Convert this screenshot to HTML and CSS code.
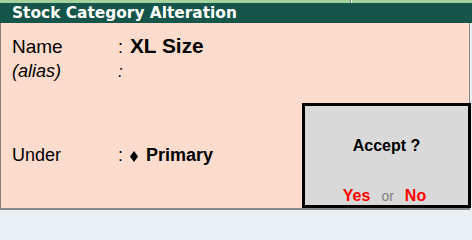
FILE: index.html
```html
<!DOCTYPE html>
<html>
<head>
<meta charset="utf-8">
<link rel="stylesheet" href="styles.css">
</head>
<body>
<div class="screen">
  <div class="menu-strip">
    <div class="menu-left"></div>
    <div class="menu-right"></div>
  </div>
  <div class="title-bar">Stock Category Alteration</div>
  <div class="form">
    <div class="fields">
      <div class="row row-name">
        <span class="label">Name</span>
        <span class="colon">:</span>
        <span class="value value-name">XL Size</span>
      </div>
      <div class="row row-alias">
        <span class="label label-alias">(alias)</span>
        <span class="colon">:</span>
        <span class="value"></span>
      </div>
      <div class="row row-under">
        <span class="label">Under</span>
        <span class="colon">:</span>
        <span class="value value-under"><svg class="diamond" width="8" height="11" viewBox="0 0 8 11"><polygon points="4,0 8,5.5 4,11 0,5.5" fill="#000"/></svg>Primary</span>
      </div>
    </div>
    <div class="accept-box">
      <div class="accept-title">Accept ?</div>
      <div class="accept-choices"><span class="choice">Yes</span><span class="or">or</span><span class="choice">No</span></div>
    </div>
  </div>
</div>
</body>
</html>
```
FILE: styles.css
```css
html, body {
  margin: 0;
  padding: 0;
}
body {
  width: 472px;
  height: 211px;
  background: #eaeff3;
  font-family: "Liberation Sans", Arial, sans-serif;
  color: #000;
  overflow: hidden;
}
.screen {
  position: relative;
  width: 472px;
  height: 211px;
}
.menu-strip {
  display: flex;
  height: 3px;
  background: #a3d29c;
}
.menu-left {
  width: 350px;
}
.menu-right {
  flex: 1;
  border-left: 1px solid #7d8f7a;
  box-shadow: inset 1px 0 0 #e8f4e6;
}
.title-bar {
  height: 20px;
  background: #16554a;
  color: #fff;
  font-family: "DejaVu Sans", Verdana, sans-serif;
  font-weight: bold;
  font-size: 15.4px;
  line-height: 20px;
  padding-left: 12px;
}
.form {
  width: 468px;
  height: 185px;
  background: #fedccd;
  border-left: 1px solid #808080;
  border-right: 1px solid #8a8a8a;
  border-bottom: 2px solid #8a8a8a;
}
.fields {
  padding: 12px 0 0 11px;
}
.row {
  display: grid;
  grid-template-columns: 106px 12px auto;
  align-items: baseline;
}
.label {
  font-size: 18px;
}
.row-name {
  line-height: 22px;
}
.row-name .label {
  font-size: 19px;
}
.colon {
  font-size: 18px;
}
.value-name {
  font-size: 20.8px;
  font-weight: bold;
}
.row-alias {
  margin-top: 3px;
  line-height: 20px;
}
.label-alias {
  font-size: 18px;
  font-style: italic;
}
.row-alias .colon {
  font-size: 17px;
  font-style: italic;
}
.row-under {
  margin-top: 62px;
  line-height: 22px;
}
.value-under {
  font-size: 18px;
  font-weight: bold;
}
.diamond {
  display: inline-block;
  vertical-align: -1px;
  margin-right: 8px;
}
.accept-box {
  position: absolute;
  left: 302px;
  top: 103px;
  width: 163px;
  height: 99px;
  border: 3px solid #000;
  background: #d9d9d9;
  text-align: center;
}
.accept-title {
  margin-top: 31px;
  font-size: 16px;
  font-weight: bold;
  line-height: 18px;
}
.accept-choices {
  margin-top: 32px;
  line-height: 18px;
  padding-right: 4px;
}
.choice {
  color: #ff0000;
  font-weight: bold;
  font-size: 16px;
}
.or {
  color: #808080;
  font-size: 14px;
  margin: 0 11px;
}
```
